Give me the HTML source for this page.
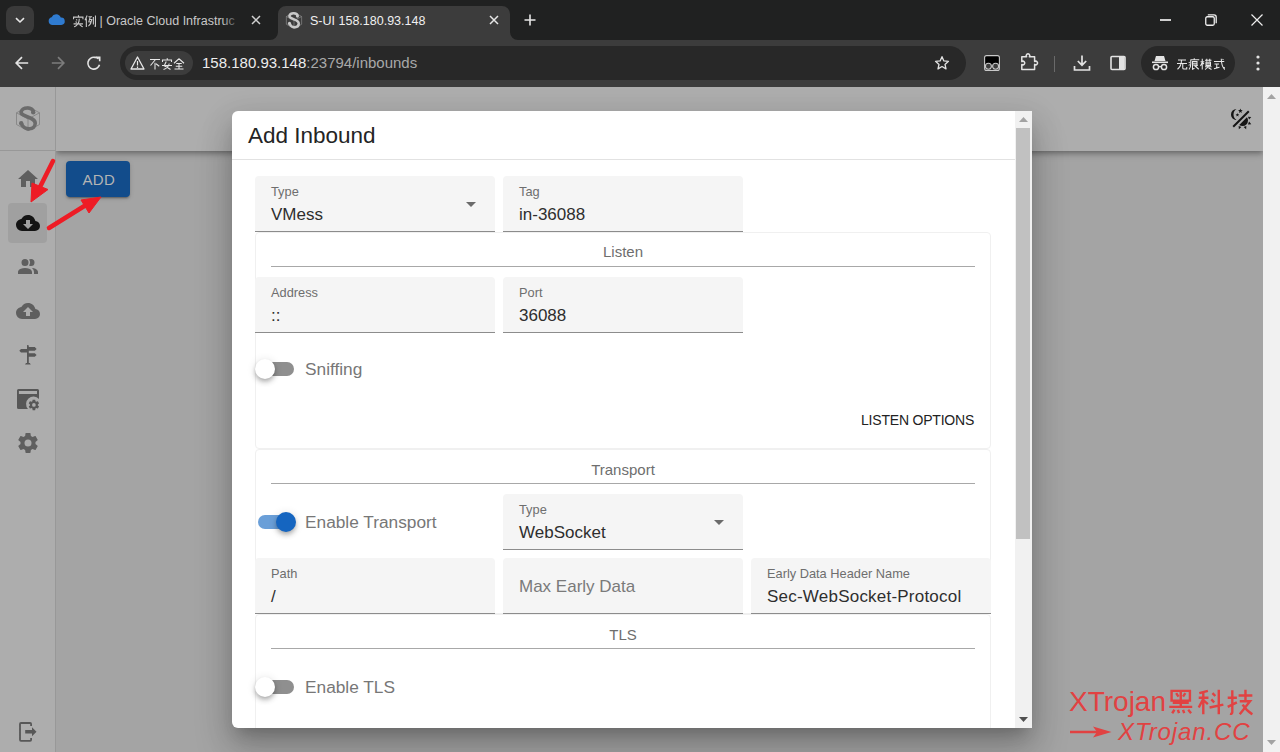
<!DOCTYPE html>
<html><head><meta charset="utf-8">
<style>
*{box-sizing:border-box;margin:0;padding:0}
html,body{width:1280px;height:752px;overflow:hidden;background:#202121;font-family:"Liberation Sans",sans-serif}
.a{position:absolute}
.t{position:absolute;line-height:1;white-space:nowrap}
svg{position:absolute;overflow:visible}
#titlebar{position:absolute;left:0;top:0;width:1280px;height:40px;background:#202121}
#toolbar{position:absolute;left:0;top:40px;width:1280px;height:47px;background:#3c3c3c}
#page{position:absolute;left:0;top:87px;width:1280px;height:665px;background:#a4a4a4;overflow:hidden}
#rail{position:absolute;z-index:2;left:0;top:0;width:56px;height:665px;background:#adadad;border-right:1px solid #989898}
#appbar{position:absolute;left:56px;top:0;width:1207px;height:64px;background:#adadad;box-shadow:0 2px 4px -1px rgba(0,0,0,.2),0 4px 5px 0 rgba(0,0,0,.14),0 1px 10px 0 rgba(0,0,0,.12)}
#pscroll{position:absolute;left:1263px;top:0;width:17px;height:665px;background:#f1f1f1}
#dialog{position:absolute;left:232px;top:111px;width:800px;height:617px;background:#fff;border-radius:6px 0 0 6px;overflow:hidden;
 box-shadow:0 11px 15px -7px rgba(0,0,0,.2),0 24px 38px 3px rgba(0,0,0,.14),0 9px 30px 4px rgba(0,0,0,.12)}
.field{position:absolute;width:240px;height:56px;background:#f5f5f5;border-radius:4px 4px 0 0;border-bottom:1px solid #8c8c8c}
.lbl{position:absolute;left:16px;top:9.6px;font-size:12.8px;line-height:1;color:#6e6e6e;white-space:nowrap}
.val{position:absolute;left:16px;top:29.7px;font-size:17px;line-height:1;color:#2e2e2e;white-space:nowrap}
.ph{position:absolute;left:16px;top:20.2px;font-size:17px;line-height:1;color:#7a7a7a;white-space:nowrap}
.card{position:absolute;left:23px;width:736px;border:1px solid #f0f0f0;border-radius:4px;background:#fff}
.sect{position:absolute;left:23px;width:736px;font-size:15px;line-height:1;color:#6e6e6e;text-align:center;white-space:nowrap}
.divl{position:absolute;left:39px;width:704px;height:1px;background:#a8a8a8}
.trk{position:absolute;left:26px;width:36px;height:14px;border-radius:7px;background:#8f8f8f}
.thm{position:absolute;width:20px;height:20px;border-radius:10px;background:#fff;box-shadow:0 2px 4px -1px rgba(0,0,0,.2),0 4px 5px 0 rgba(0,0,0,.14),0 1px 10px 0 rgba(0,0,0,.12)}
.swl{position:absolute;left:73px;font-size:17.3px;line-height:1;color:#777;white-space:nowrap}
.dd{position:absolute;left:211px;top:26px;width:0;height:0;border-left:5px solid transparent;border-right:5px solid transparent;border-top:5px solid #6b6b6b}
</style></head>
<body>
<svg width="0" height="0" style="position:absolute"><defs><symbol id="g-hei" viewBox="0 0 24 24"><path d="M4 2.5H20V11H4Z M8 4.5L10 7.5 M16 4.5L14 7.5 M12 2.5V16 M5 13H19 M2 16.5H22 M4.5 22L6.5 19 M9.5 19L10.5 22 M14 19L15 22 M18.5 19L21 22" fill="none" stroke="currentColor" stroke-width="2.1" stroke-linejoin="miter"/></symbol><symbol id="g-ke" viewBox="0 0 24 24"><path d="M2 4.5L9.5 2.5 M1.5 8.5H10 M5.5 3V23 M5.5 9.5L1.5 17 M6 11L9.5 14 M13.5 4.5L16 7 M12.5 10L15 12.5 M11 17L23 14.5 M19 1.5V23" fill="none" stroke="currentColor" stroke-width="2.1" stroke-linejoin="miter"/></symbol><symbol id="g-ji" viewBox="0 0 24 24"><path d="M1.5 8.5H9.5 M5.5 2V21Q5.5 23 3.5 22.5 M1.5 16.5L9.5 12.5 M11 6.5H23 M17 1.5V11 M12 11.5H21L12 23 M14.5 14.5Q18 20 23 23" fill="none" stroke="currentColor" stroke-width="2.1" stroke-linejoin="miter"/></symbol><symbol id="g-shi" viewBox="0 0 24 24"><path d="M12 0.5L13 3 M3 8V4H21V8 M8 8.5L10 10.5 M7 12.5L9 14.5 M3 17H21 M14 7Q14 18 4 23 M14.5 18.5L20.5 23" fill="none" stroke="currentColor" stroke-width="2.1" stroke-linejoin="miter"/></symbol><symbol id="g-li" viewBox="0 0 24 24"><path d="M6 1L2 10 M4.5 6.5V23 M8.5 3.5H15.5 M12 3.5L9 14 M10.5 8.5H15Q14 17 8.5 21.5 M11 12.5L13.5 15 M18 4V18 M22 1V21.5L20 21" fill="none" stroke="currentColor" stroke-width="2.1" stroke-linejoin="miter"/></symbol><symbol id="g-bu" viewBox="0 0 24 24"><path d="M2 3H22 M13 3L3 15 M12 9.5V23 M14 11.5L20.5 16.5" fill="none" stroke="currentColor" stroke-width="2.1" stroke-linejoin="miter"/></symbol><symbol id="g-an" viewBox="0 0 24 24"><path d="M12 0.5L13 3 M3 8V4H21V8 M2 15H22 M10.5 7L6.5 15.5Q13 19 19 23 M16.5 11Q14.5 20 5 23" fill="none" stroke="currentColor" stroke-width="2.1" stroke-linejoin="miter"/></symbol><symbol id="g-quan" viewBox="0 0 24 24"><path d="M12 1.5L2 10.5 M12 1.5L22 10.5 M6.5 11H17.5 M5.5 16.5H18.5 M12 11V22 M3 22H21" fill="none" stroke="currentColor" stroke-width="2.1" stroke-linejoin="miter"/></symbol><symbol id="g-wu" viewBox="0 0 24 24"><path d="M4 4H20 M2 11H22 M11 4Q11 16 3 22.5 M13.5 11V20Q13.5 22 16 22H21.5V18" fill="none" stroke="currentColor" stroke-width="2.1" stroke-linejoin="miter"/></symbol><symbol id="g-hen" viewBox="0 0 24 24"><path d="M12.5 0.5V3 M5 3.5H22.5 M5.5 3.5V12Q5.5 19 2 23 M1.5 8L3.5 10 M1.5 15L3.5 13 M9 7H18V14H9Z M9 10.5H18 M9 7V22.5L13 20.5 M13 15L21.5 22.5 M19.5 14L16.5 16" fill="none" stroke="currentColor" stroke-width="2.1" stroke-linejoin="miter"/></symbol><symbol id="g-mo" viewBox="0 0 24 24"><path d="M1 7.5H8.5 M4.5 1.5V23 M4.5 8.5L1 16 M5 9.5L8 12 M10 4.5H23 M13.5 1.5V7 M19.5 1.5V7 M12 8.5H21V15H12Z M12 11.75H21 M10 17.5H23 M16.5 15Q15 21 10 23 M17 19.5L23 23" fill="none" stroke="currentColor" stroke-width="2.1" stroke-linejoin="miter"/></symbol><symbol id="g-shi2" viewBox="0 0 24 24"><path d="M2 7H22.5 M16.5 1.5Q17 16 22.5 22V18 M19 2L21 4 M3 12H12 M7.5 12V20 M2 21.5L13 18.5" fill="none" stroke="currentColor" stroke-width="2.1" stroke-linejoin="miter"/></symbol></defs></svg>
<div id="titlebar">
  <div class="a" style="left:6px;top:6px;width:28px;height:28px;border-radius:8px;background:#3a3a3a"></div>
  <svg style="left:14px;top:14px" width="12" height="12" viewBox="0 0 12 12"><path d="M2 4.2L6 8L10 4.2" fill="none" stroke="#e6e6e6" stroke-width="1.6"/></svg>
  <!-- tab1 -->
  <svg style="left:48px;top:13px" width="17" height="12" viewBox="0 0 17 12"><path d="M4 12A4 4 0 0 1 3.6 4.2A5 5 0 0 1 12.8 4.6A3.7 3.7 0 0 1 13.3 12Z" fill="#2f7bd0"/></svg>
  <svg style="left:71.5px;top:14.5px;color:#c8c8c8" width="12.5" height="12.5"><use href="#g-shi"/></svg><svg style="left:84.0px;top:14.5px;color:#c8c8c8" width="12.5" height="12.5"><use href="#g-li"/></svg><div class="t" style="left:99.5px;top:14.5px;font-size:12.5px;color:#c8c8c8">| Oracle Cloud Infrastruc</div>
  <div class="a" style="left:222px;top:8px;width:24px;height:26px;background:linear-gradient(90deg,rgba(32,33,33,0),#202121 75%)"></div>
  <svg style="left:251px;top:15px" width="10" height="10" viewBox="0 0 10 10"><path d="M1 1L9 9M9 1L1 9" stroke="#d0d0d0" stroke-width="1.5"/></svg>
  <!-- tab2 active -->
  <svg style="left:270px;top:6px" width="250" height="34" viewBox="0 0 250 34"><path d="M0 34A8 8 0 0 0 8 26V8A8 8 0 0 1 16 0H232A8 8 0 0 1 240 8V26A8 8 0 0 0 248 34Z" fill="#3c3c3c"/></svg>
  <svg style="left:286px;top:12px" width="16" height="16.6" viewBox="16 106 24 25"><path d="M28 106.5L39.5 112.8V124.5L28 130.8L16.5 124.5V112.8Z M16.5 112.8L28 119L39.5 112.8 M28 119V130.8" fill="none" stroke="#9a9a9a" stroke-width="1.1" opacity="0.8"/><path d="M33.5 111.5C32 107 23 106.5 21.2 111.5C19.5 117 35.5 116.5 35.2 123.5C35 130 25 131 21.5 124" fill="none" stroke="#c8c8c8" stroke-width="3.8"/><circle cx="33.2" cy="112.2" r="2.4" fill="#c8c8c8"/><circle cx="21.2" cy="123.2" r="2.4" fill="#c8c8c8"/></svg>
  <div class="t" style="left:310px;top:14.5px;font-size:12.5px;color:#f0f0f0">S-UI 158.180.93.148</div>
  <svg style="left:489px;top:15px" width="10" height="10" viewBox="0 0 10 10"><path d="M1 1L9 9M9 1L1 9" stroke="#e6e6e6" stroke-width="1.5"/></svg>
  <svg style="left:524px;top:14px" width="12" height="12" viewBox="0 0 12 12"><path d="M6 0.5V11.5M0.5 6H11.5" stroke="#e6e6e6" stroke-width="1.6"/></svg>
  <!-- window controls -->
  <div class="a" style="left:1160px;top:19.2px;width:11px;height:1.4px;background:#cfcfcf"></div>
  <svg style="left:1205px;top:14px" width="12" height="12" viewBox="0 0 12 12"><rect x="0.75" y="2.75" width="8.5" height="8.5" rx="1.5" fill="none" stroke="#eee" stroke-width="1.3"/><path d="M2.8 0.8H9A2.2 2.2 0 0 1 11.2 3V9.2" fill="none" stroke="#eee" stroke-width="1.3"/></svg>
  <svg style="left:1251px;top:14px" width="12" height="12" viewBox="0 0 12 12"><path d="M0.5 0.5L11.5 11.5M11.5 0.5L0.5 11.5" stroke="#eee" stroke-width="1.2"/></svg>
</div>
<div id="toolbar">
  <svg style="left:14px;top:15px" width="16" height="16" viewBox="0 0 16 16"><path d="M14.2 8H2.5M8 2.2L2.2 8L8 13.8" fill="none" stroke="#e3e3e3" stroke-width="1.7"/></svg>
  <svg style="left:50px;top:15px" width="16" height="16" viewBox="0 0 16 16"><path d="M1.8 8H13.5M8 2.2L13.8 8L8 13.8" fill="none" stroke="#7c7c7c" stroke-width="1.7"/></svg>
  <svg style="left:86px;top:15px" width="16" height="16" viewBox="0 0 16 16"><path d="M13.50 9.73A5.9 5.9 0 1 1 8.82 2.39Q11 2.3 12.6 3.8" fill="none" stroke="#e3e3e3" stroke-width="1.6"/><path d="M9.8 2.3H13.7V6.2" fill="none" stroke="#e3e3e3" stroke-width="1.6"/></svg>
  <div class="a" style="left:120px;top:6px;width:846px;height:34px;border-radius:17px;background:#282828"></div>
  <div class="a" style="left:125px;top:11px;width:68px;height:24px;border-radius:12px;background:#3c3c3c"></div>
  <svg style="left:130px;top:16px" width="15" height="14" viewBox="0 0 15 14"><path d="M7.5 1L14 13H1Z" fill="none" stroke="#e8e8e8" stroke-width="1.3" stroke-linejoin="round"/><path d="M7.5 5V9.5M7.5 10.6V12" stroke="#e8e8e8" stroke-width="1.2"/></svg>
  <svg style="left:149.0px;top:17.5px;color:#e8e8e8" width="12" height="12"><use href="#g-bu"/></svg><svg style="left:161.2px;top:17.5px;color:#e8e8e8" width="12" height="12"><use href="#g-an"/></svg><svg style="left:173.4px;top:17.5px;color:#e8e8e8" width="12" height="12"><use href="#g-quan"/></svg>
  <div class="t" style="left:202px;top:15.2px;font-size:15px;color:#ededed">158.180.93.148<span style="color:#a8a8a8">:23794/inbounds</span></div>
  <svg style="left:934px;top:15px" width="16" height="16" viewBox="0 0 24 24"><path d="M12 2.5L14.8 8.9L21.7 9.5L16.5 14.1L18 20.9L12 17.3L6 20.9L7.5 14.1L2.3 9.5L9.2 8.9Z" fill="none" stroke="#e3e3e3" stroke-width="2" stroke-linejoin="round"/></svg>
  <svg style="left:984px;top:15px" width="16" height="16" viewBox="0 0 16 16"><rect x="0.6" y="0.6" width="14.8" height="14.8" rx="2" fill="#000" stroke="#c8c8c8" stroke-width="1.1"/><circle cx="4.4" cy="11.3" r="3" fill="#3c3c3c" stroke="#c8c8c8" stroke-width="1.1"/><circle cx="11.6" cy="11.3" r="3" fill="#3c3c3c" stroke="#c8c8c8" stroke-width="1.1"/></svg>
  <svg style="left:1020px;top:13px" width="18" height="18" viewBox="0 0 18 18"><path d="M1.8 3.8H6.6A1.8 1.8 0 1 1 9.4 3.8H14.6V8.6A1.8 1.8 0 1 1 14.6 11.4V16.4H1.8V11.4A1.8 1.8 0 1 0 1.8 8.6Z" fill="none" stroke="#e3e3e3" stroke-width="1.5" stroke-linejoin="round"/></svg>
  <div class="a" style="left:1054px;top:16px;width:1px;height:16px;background:#6a6a6a"></div>
  <svg style="left:1073px;top:14px" width="18" height="18" viewBox="0 0 18 18"><path d="M9 1.5V11M4.8 7L9 11.2L13.2 7M1.5 12V16H16.5V12" fill="none" stroke="#e3e3e3" stroke-width="1.7"/></svg>
  <svg style="left:1110px;top:15px" width="16" height="16" viewBox="0 0 16 16"><rect x="1" y="1.5" width="14" height="13" rx="1" fill="none" stroke="#e3e3e3" stroke-width="1.6"/><rect x="9" y="2" width="5.5" height="12" fill="#e3e3e3"/></svg>
  <div class="a" style="left:1141px;top:6px;width:94px;height:34px;border-radius:17px;background:#282828"></div>
  <svg style="left:1151px;top:14px" width="18" height="18" viewBox="0 0 18 18"><path d="M5 2L13 2L14.5 7H3.5Z" fill="#e3e3e3"/><rect x="1" y="7.5" width="16" height="1.6" fill="#e3e3e3"/><circle cx="5" cy="13" r="2.6" fill="none" stroke="#e3e3e3" stroke-width="1.5"/><circle cx="13" cy="13" r="2.6" fill="none" stroke="#e3e3e3" stroke-width="1.5"/><path d="M7.5 12.6H10.5" stroke="#e3e3e3" stroke-width="1.4"/></svg>
  <svg style="left:1176.0px;top:17.5px;color:#e8e8e8" width="12" height="12"><use href="#g-wu"/></svg><svg style="left:1188.2px;top:17.5px;color:#e8e8e8" width="12" height="12"><use href="#g-hen"/></svg><svg style="left:1200.4px;top:17.5px;color:#e8e8e8" width="12" height="12"><use href="#g-mo"/></svg><svg style="left:1212.6px;top:17.5px;color:#e8e8e8" width="12" height="12"><use href="#g-shi2"/></svg>
  <svg style="left:1255px;top:15px" width="6" height="16" viewBox="0 0 6 16"><circle cx="3" cy="2" r="1.6" fill="#e3e3e3"/><circle cx="3" cy="8" r="1.6" fill="#e3e3e3"/><circle cx="3" cy="14" r="1.6" fill="#e3e3e3"/></svg>
</div>
<div id="page">
  <div id="rail">
    <svg style="left:0;top:0" width="56" height="64" viewBox="0 87 56 64">
      <path d="M28 106.5L39.5 112.8V124.5L28 130.8L16.5 124.5V112.8Z M16.5 112.8L28 119L39.5 112.8 M28 119V130.8" fill="none" stroke="#7a7a7a" stroke-width="0.9" opacity="0.8"/>
      <path d="M33.5 111.5C32 107 23 106.5 21.2 111.5C19.5 117 35.5 116.5 35.2 123.5C35 130 25 131 21.5 124" fill="none" stroke="#6b6b6b" stroke-width="3.6"/>
      <circle cx="33.2" cy="112.2" r="2.2" fill="#6b6b6b"/><circle cx="21.2" cy="123.2" r="2.2" fill="#6b6b6b"/>
    </svg>
    <div class="a" style="left:0;top:63px;width:55px;height:1px;background:#989898"></div>
    <svg style="left:16px;top:80px" width="24" height="24" viewBox="0 0 24 24"><path d="M10,20V14H14V20H19V12H22L12,3L2,12H5V20H10Z" fill="#5f5f5f"/></svg>
    <div class="a" style="left:8px;top:116px;width:39px;height:40px;border-radius:4px;background:#a0a0a0"></div>
    <svg style="left:16px;top:124px" width="24" height="24" viewBox="0 0 24 24"><path d="M17,13L12,18L7,13H10V9H14V13M19.35,10.03C18.67,6.59 15.64,4 12,4C9.11,4 6.6,5.64 5.35,8.03C2.34,8.36 0,10.9 0,14A6,6 0 0,0 6,20H19A5,5 0 0,0 24,15C24,12.36 21.95,10.22 19.35,10.03Z" fill="#141414"/></svg>
    <svg style="left:16px;top:168px" width="24" height="24" viewBox="0 0 24 24"><path d="M16 17V19H2V17S2 13 9 13 16 17 16 17M12.5 7.5A3.5 3.5 0 1 0 9 11A3.5 3.5 0 0 0 12.5 7.5M15.94 13A5.32 5.32 0 0 1 18 17V19H22V17S22 13.37 15.94 13M15 4A3.39 3.39 0 0 0 13.07 4.59A5 5 0 0 1 13.07 10.41A3.39 3.39 0 0 0 15 11A3.5 3.5 0 0 0 15 4Z" fill="#5f5f5f"/></svg>
    <svg style="left:16px;top:212px" width="24" height="24" viewBox="0 0 24 24"><path d="M14,13V17H10V13H7L12,8L17,13M19.35,10.03C18.67,6.59 15.64,4 12,4C9.11,4 6.6,5.64 5.35,8.03C2.34,8.36 0,10.9 0,14A6,6 0 0,0 6,20H19A5,5 0 0,0 24,15C24,12.36 21.95,10.22 19.35,10.03Z" fill="#5f5f5f"/></svg>
    <svg style="left:16px;top:256px" width="24" height="24" viewBox="0 0 24 24"><path d="M11 2.2Q11.9 1.8 12.8 2.6V19.9H11Z M9 21.6H14.8L13.8 19.9H10Z M3.3 7.8L5 6.1H11.2V9.6H5Z M12.5 4.1H18.8L20.6 5.9L18.8 7.7H12.5Z M12.5 10.2H18.8L20.6 12L18.8 13.8H12.5Z" fill="#575757"/></svg>
    <svg style="left:16px;top:300px" width="24" height="24" viewBox="0 0 24 24"><path d="M2.5 2H21.5A1.5 1.5 0 0 1 23 3.5V12A7.2 7.2 0 0 0 12 22H2.5A1.5 1.5 0 0 1 1 20.5V3.5A1.5 1.5 0 0 1 2.5 2Z M2.9 4V6.9H21V4Z" fill="#575757" fill-rule="evenodd"/><path transform="translate(11.6 11.6) scale(0.525)" d="M12,15.5A3.5,3.5 0 0,1 8.5,12A3.5,3.5 0 0,1 12,8.5A3.5,3.5 0 0,1 15.5,12A3.5,3.5 0 0,1 12,15.5M19.43,12.97C19.47,12.65 19.5,12.33 19.5,12C19.5,11.67 19.47,11.34 19.43,11L21.54,9.37C21.73,9.22 21.78,8.95 21.66,8.73L19.66,5.27C19.54,5.05 19.27,4.96 19.05,5.05L16.56,6.05C16.04,5.66 15.5,5.32 14.87,5.07L14.5,2.42C14.46,2.18 14.25,2 14,2H10C9.75,2 9.54,2.18 9.5,2.42L9.13,5.07C8.5,5.32 7.96,5.66 7.440,6.05L4.95,5.05C4.73,4.96 4.46,5.05 4.34,5.27L2.34,8.73C2.21,8.95 2.27,9.22 2.46,9.37L4.57,11C4.53,11.34 4.5,11.67 4.5,12C4.5,12.33 4.53,12.65 4.57,12.97L2.46,14.63C2.27,14.78 2.21,15.05 2.34,15.27L4.34,18.73C4.46,18.95 4.73,19.03 4.95,18.95L7.44,17.94C7.96,18.34 8.5,18.68 9.13,18.93L9.5,21.58C9.54,21.82 9.75,22 10,22H14C14.25,22 14.46,21.82 14.5,21.58L14.87,18.93C15.5,18.67 16.04,18.34 16.56,17.94L19.05,18.95C19.27,19.03 19.54,18.95 19.66,18.73L21.66,15.27C21.78,15.05 21.73,14.78 21.54,14.63L19.43,12.97Z" fill="#575757"/></svg>
    <svg style="left:16px;top:344px" width="24" height="24" viewBox="0 0 24 24"><path d="M12,15.5A3.5,3.5 0 0,1 8.5,12A3.5,3.5 0 0,1 12,8.5A3.5,3.5 0 0,1 15.5,12A3.5,3.5 0 0,1 12,15.5M19.43,12.97C19.47,12.65 19.5,12.33 19.5,12C19.5,11.67 19.47,11.34 19.43,11L21.54,9.37C21.73,9.22 21.78,8.95 21.66,8.73L19.66,5.27C19.54,5.05 19.27,4.96 19.05,5.05L16.56,6.05C16.04,5.66 15.5,5.32 14.87,5.07L14.5,2.42C14.46,2.18 14.25,2 14,2H10C9.750,2 9.54,2.18 9.5,2.42L9.13,5.07C8.5,5.32 7.96,5.66 7.44,6.05L4.95,5.05C4.73,4.96 4.46,5.05 4.34,5.27L2.34,8.73C2.21,8.95 2.27,9.22 2.46,9.37L4.57,11C4.53,11.34 4.5,11.67 4.5,12C4.5,12.33 4.53,12.65 4.57,12.97L2.46,14.63C2.27,14.78 2.21,15.05 2.34,15.27L4.34,18.73C4.46,18.95 4.73,19.03 4.95,18.95L7.44,17.94C7.96,18.34 8.5,18.68 9.13,18.93L9.5,21.58C9.54,21.82 9.75,22 10,22H14C14.250,22 14.46,21.82 14.5,21.58L14.87,18.93C15.5,18.67 16.04,18.34 16.56,17.94L19.05,18.95C19.27,19.03 19.54,18.95 19.66,18.73L21.66,15.27C21.78,15.05 21.73,14.78 21.54,14.63L19.43,12.97Z" fill="#5f5f5f"/></svg>
    <svg style="left:16px;top:632px" width="24" height="24" viewBox="0 0 24 24"><path d="M16 3.1H5A1.9 1.9 0 0 0 3.1 5V20.8A1.9 1.9 0 0 0 5 22.7H14.1A1.9 1.9 0 0 0 16 20.8V19H14.2V20.9H4.9V4.9H14.2V7H16V5A1.9 1.9 0 0 0 14.1 3.1Z M9.2 11H16V8.3L20.5 12.8L16 17.3V14.6H9.2Z" fill="#575757"/></svg>
  </div>
  <div id="appbar">
    <svg style="left:1173px;top:20px" width="24" height="24" viewBox="0 0 24 24"><path d="M7.5,2C5.71,3.15 4.5,5.18 4.5,7.5C4.5,9.82 5.71,11.85 7.53,13C4.46,13 2,10.54 2,7.5A5.5,5.5 0 0,1 7.5,2M19.07,3.5L20.5,4.93L4.93,20.5L3.5,19.07L19.07,3.5M12.89,5.93L11.41,5L9.970,6L10.39,4.3L9,3.24L10.75,3.12L11.33,1.47L12,3.1L13.73,3.13L12.38,4.26L12.89,5.93M9.59,9.54L8.43,8.81L7.31,9.59L7.65,8.27L6.56,7.44L7.92,7.35L8.37,6.06L8.88,7.33L10.24,7.36L9.19,8.23L9.59,9.54M19,13.5A5.5,5.5 0 0,1 13.5,19C12.28,19 11.15,18.6 10.24,17.930L17.93,10.24C18.6,11.15 19,12.28 19,13.5M14.6,20.08L17.37,18.93L17.13,22.28L14.6,20.08M18.93,17.38L20.08,14.61L22.28,17.15L18.93,17.38M20.08,12.42L18.94,9.64L22.28,9.88L20.08,12.42M9.63,18.93L12.4,20.08L9.87,22.27L9.63,18.93Z" fill="#151515"/></svg>
  </div>
  <div class="a" style="left:66px;top:74px;width:64px;height:36px;border-radius:4px;background:#124c8b;box-shadow:0 3px 1px -2px rgba(0,0,0,.2),0 2px 2px 0 rgba(0,0,0,.14),0 1px 5px 0 rgba(0,0,0,.12)"></div>
  <div class="t" style="left:82.5px;top:85px;font-size:15px;color:#b4b4b4;letter-spacing:0.3px">ADD</div>
  <div id="pscroll">
    <svg style="left:4px;top:7px" width="9" height="5" viewBox="0 0 9 5"><path d="M0 5L4.5 0L9 5Z" fill="#a3a3a3"/></svg>
    <svg style="left:4px;top:653px" width="9" height="5" viewBox="0 0 9 5"><path d="M0 0L4.5 5L9 0Z" fill="#a3a3a3"/></svg>
  </div>
  <svg style="left:0;top:0;z-index:5" width="1280" height="665" viewBox="0 87 1280 665">
    <path d="M53 161L38 191" stroke="#ee1c25" stroke-width="4.5" stroke-linecap="round"/>
    <path d="M32 183L48 189.5L31 202Z" fill="#ee1c25" stroke="#ee1c25" stroke-width="1" stroke-linejoin="round"/>
    <path d="M49 228L86 205" stroke="#ee1c25" stroke-width="4.5" stroke-linecap="round"/>
    <path d="M101 197L81 200L89 213Z" fill="#ee1c25" stroke="#ee1c25" stroke-width="1" stroke-linejoin="round"/>
  </svg>
  <div class="t" style="left:1069px;top:601px;font-size:28px;color:#e14242">XTrojan</div><svg style="left:1167.0px;top:600.5px;color:#e14242" width="27.5" height="27.5"><use href="#g-hei"/></svg><svg style="left:1196.6px;top:600.5px;color:#e14242" width="27.5" height="27.5"><use href="#g-ke"/></svg><svg style="left:1226.2px;top:600.5px;color:#e14242" width="27.5" height="27.5"><use href="#g-ji"/></svg>
  <svg style="left:1070px;top:639px" width="42" height="12" viewBox="0 0 42 12"><path d="M0 6H34" stroke="#e14242" stroke-width="2.4"/><path d="M23 0.5L41.5 6L23 11.5L27 6Z" fill="#e14242"/></svg>
  <div class="t" style="left:1118px;top:633px;font-size:24px;font-style:italic;color:#e14242;letter-spacing:0.9px">XTrojan.CC</div>
</div>
<div id="dialog">
  <div class="t" style="left:16px;top:13.9px;font-size:22.5px;color:#242424">Add Inbound</div>
  <div class="a" style="left:0;top:48px;width:783px;height:1px;background:#e2e2e2"></div>

  <div class="field" style="left:23px;top:65px"><div class="lbl">Type</div><div class="val">VMess</div><div class="dd"></div></div>
  <div class="field" style="left:271px;top:65px"><div class="lbl">Tag</div><div class="val">in-36088</div></div>

  <div class="card" style="top:121px;height:217px"></div>
  <div class="sect" style="top:133.3px">Listen</div>
  <div class="divl" style="top:155px"></div>
  <div class="field" style="left:23px;top:166px"><div class="lbl">Address</div><div class="val">::</div></div>
  <div class="field" style="left:271px;top:166px"><div class="lbl">Port</div><div class="val">36088</div></div>
  <div class="trk" style="top:251px"></div>
  <div class="thm" style="left:23.3px;top:248px"></div>
  <div class="swl" style="top:250.1px">Sniffing</div>
  <div class="t" style="left:629px;top:302px;font-size:14px;letter-spacing:-0.2px;color:#222">LISTEN OPTIONS</div>

  <div class="card" style="top:338px;height:165px"></div>
  <div class="sect" style="top:351px">Transport</div>
  <div class="divl" style="top:372px"></div>
  <div class="trk" style="top:404px;background:#6a9fd8"></div>
  <div class="thm" style="left:43.5px;top:401px;background:#1565c0"></div>
  <div class="swl" style="top:402.9px">Enable Transport</div>
  <div class="field" style="left:271px;top:383px"><div class="lbl">Type</div><div class="val">WebSocket</div><div class="dd"></div></div>
  <div class="field" style="left:23px;top:447px"><div class="lbl">Path</div><div class="val">/</div></div>
  <div class="field" style="left:271px;top:447px"><div class="ph">Max Early Data</div></div>
  <div class="field" style="left:519px;top:447px"><div class="lbl">Early Data Header Name</div><div class="val" style="letter-spacing:0.22px">Sec-WebSocket-Protocol</div></div>

  <div class="card" style="top:503px;height:200px"></div>
  <div class="sect" style="top:516.3px">TLS</div>
  <div class="divl" style="top:537px"></div>
  <div class="trk" style="top:569px"></div>
  <div class="thm" style="left:23.2px;top:566px"></div>
  <div class="swl" style="top:567.9px">Enable TLS</div>

  <div class="a" style="left:783px;top:0;width:17px;height:617px;background:#f1f1f1"></div>
  <div class="a" style="left:784px;top:17px;width:14px;height:411px;background:#c1c1c1"></div>
  <svg style="left:787px;top:6px" width="9" height="5" viewBox="0 0 9 5"><path d="M0 5L4.5 0L9 5Z" fill="#a3a3a3"/></svg>
  <svg style="left:787px;top:606px" width="9" height="5" viewBox="0 0 9 5"><path d="M0 0L4.5 5L9 0Z" fill="#505050"/></svg>
</div>
</body></html>
